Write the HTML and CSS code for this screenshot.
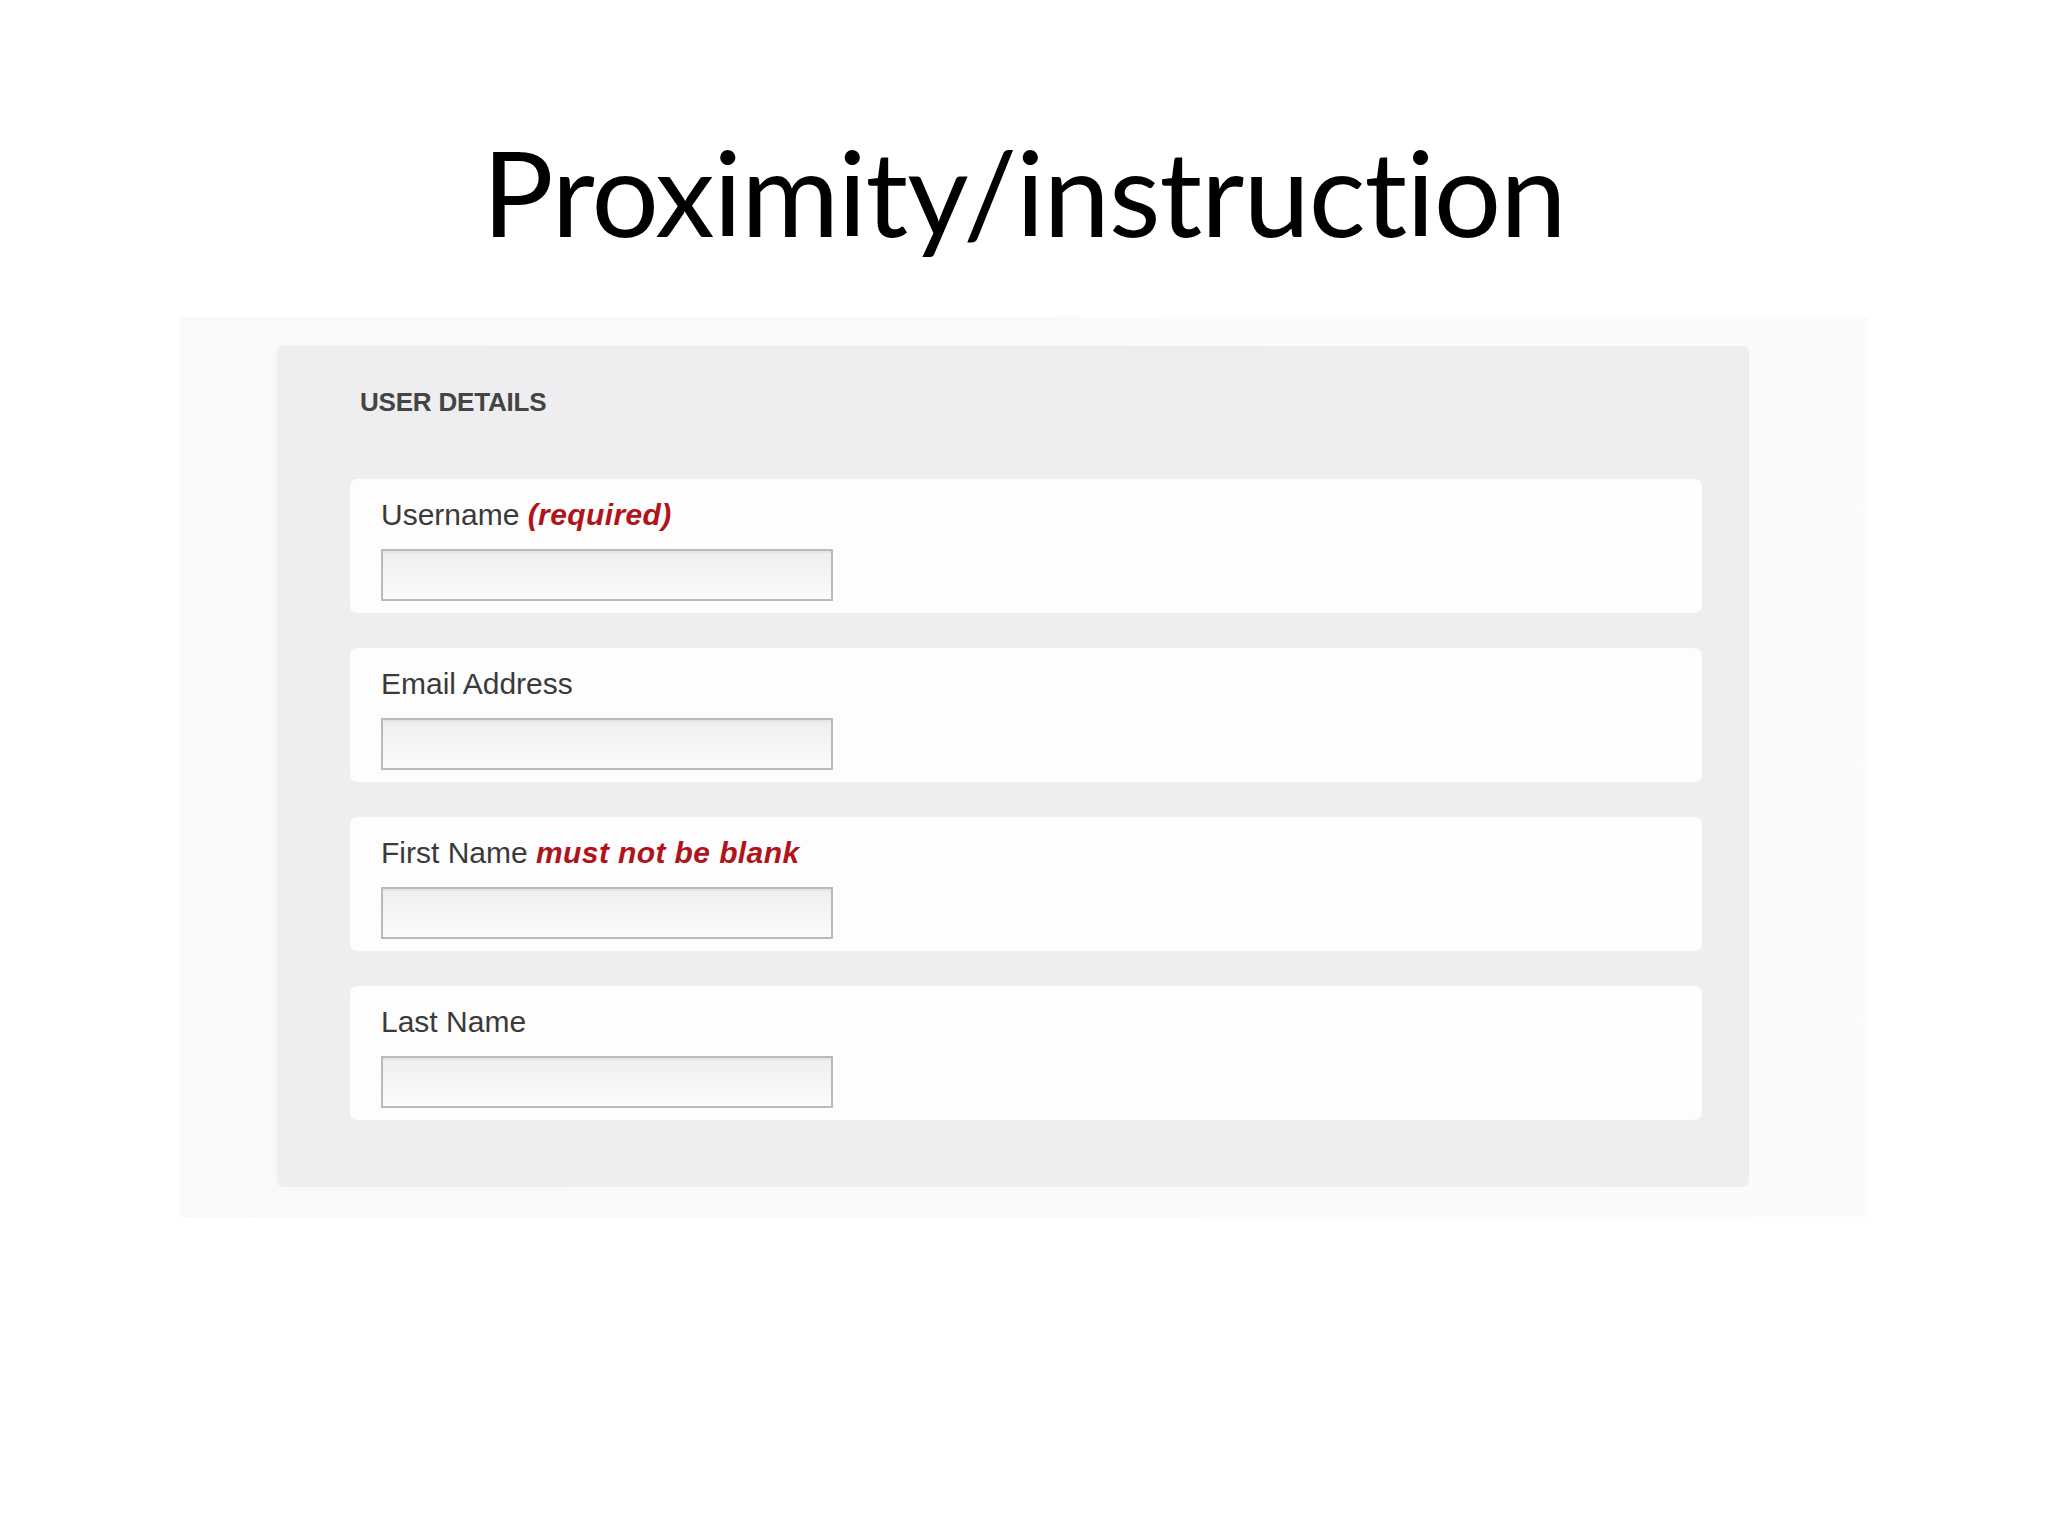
FILE: index.html
```html
<!DOCTYPE html>
<html lang="en">

<head>
  <meta charset="UTF-8">
  <title>Proximity/instruction</title>
  <link rel="stylesheet" href="styles.css">
</head>

<body>
  <main class="slide">
    <h1 class="slide-title">Proximity/instruction</h1>

    <div class="shot">
      <form class="details">
        <h2>USER DETAILS</h2>

        <div class="field">
          <label for="username">Username <em>(required)</em></label>
          <input type="text" id="username" name="username">
        </div>

        <div class="field">
          <label for="email">Email Address</label>
          <input type="email" id="email" name="email">
        </div>

        <div class="field">
          <label for="first">First Name <em>must not be blank</em></label>
          <input type="text" id="first" name="first">
        </div>

        <div class="field">
          <label for="last">Last Name</label>
          <input type="text" id="last" name="last">
        </div>
      </form>
    </div>
  </main>
</body>

</html>
```

FILE: styles.css
```css
body {
  margin: 0;
  background: #fff;
  width: 2048px;
  height: 1536px;
  overflow: hidden;
}

.slide {
  display: flex;
  flex-direction: column;
  align-items: center;
}

.slide-title {
  margin: 126px 0 0;
  font-family: Lato, "Open Sans", sans-serif;
  font-weight: 400;
  font-size: 119px;
  line-height: 130px;
  color: #000;
  letter-spacing: -1px;
}

/* the pasted screenshot of the form */
.shot {
  margin-top: 61px;
  width: 1688px;
  box-sizing: border-box;
  padding: 29px 119px 30px 97px;
  background: linear-gradient(90deg, #f9f9f9, #fbfafc);
}

.details {
  background: #eeedef;
  border-radius: 6px;
  padding: 36px 47px 67px 73px;
  display: flex;
  flex-direction: column;
  gap: 35px;
}

.details h2 {
  margin: 0 0 22px 10px;
  font-family: "Liberation Sans", Arial, sans-serif;
  font-weight: 700;
  font-size: 26px;
  line-height: 40px;
  color: #444;
  letter-spacing: -0.2px;
}

.field {
  background: #fdfdfd;
  border-radius: 7px;
  height: 134px;
  box-sizing: border-box;
  padding: 17px 31px 0;
  display: flex;
  flex-direction: column;
  align-items: flex-start;
  gap: 15px;
}

.field label {
  font-family: "Liberation Sans", Arial, sans-serif;
  font-size: 30px;
  line-height: 38px;
  color: #3a3a3a;
}

.field label em {
  font-weight: 700;
  color: #b0141a;
  letter-spacing: 0.4px;
}

.field input {
  width: 452px;
  height: 52px;
  box-sizing: border-box;
  margin: 0;
  border: 2px solid #bababb;
  border-radius: 0;
  background: linear-gradient(#eeeef0, #f6f6f8 55%, #fbfbfc);
  box-shadow: inset 0 2px 1px rgba(0, 0, 0, 0.04);
}
```
